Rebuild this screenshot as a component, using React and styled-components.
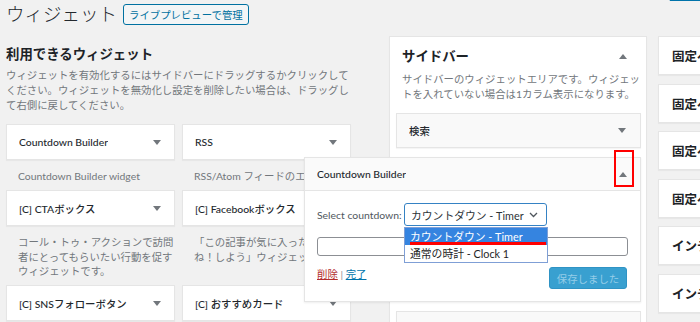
import styled, { createGlobalStyle } from 'styled-components';

const GlobalStyle = createGlobalStyle`
  html, body {
    margin: 0;
    padding: 0;
    background: #f1f1f1;
    overflow: hidden;
  }
  body {
    font-family: Lato, "Noto Sans CJK JP", sans-serif;
    font-size: 10.4px;
    color: #23282d;
  }
  * { box-sizing: border-box; }
`;

const available = [
  { title: 'Countdown Builder', desc: ['Countdown Builder widget'] },
  { title: 'RSS', desc: ['RSS/Atom フィードのエントリー。'] },
  { title: '[C] CTAボックス', desc: ['コール・トゥ・アクションで訪問', '者にとってもらいたい行動を促す', 'ウィジェットです。'] },
  { title: '[C] Facebookボックス', desc: ['「この記事が気に入ったらいい', 'ね！しよう」ウィジェットです。'] },
  { title: '[C] SNSフォローボタン', desc: ['SNSフォローボタンを表示する'] },
  { title: '[C] おすすめカード', desc: ['おすすめカードを表示します。'] },
];

const areas = [
  '固定ページタイトル上',
  '固定ページ本文上',
  '固定ページ本文中',
  '固定ページ本文下',
  'インデックスリスト上',
  'インデックスリスト中',
];

const Page = styled.div`
  width: 700px;
  height: 322px;
  overflow: hidden;
  padding-left: 6px;
`;

const Header = styled.header`
  display: flex;
  align-items: flex-start;
  height: 36px;
`;

const Title = styled.h1`
  margin: 0;
  font-family: "Noto Sans CJK JP", sans-serif;
  font-size: 18.5px;
  font-weight: 300;
  line-height: 27px;
  color: #23282d;
`;

const PreviewButton = styled.button`
  margin: 4px 0 0 6px;
  height: 21px;
  padding: 0 5px;
  font-family: inherit;
  font-size: 10.4px;
  color: #0071a1;
  background: #f3f5f6;
  border: 1px solid #0071a1;
  border-radius: 3px;
`;

const HelpLink = styled.a`
  margin: -12px -14px 0 auto;
  font-size: 10.4px;
  line-height: 14px;
  color: #0073aa;
  text-decoration: underline;
  white-space: nowrap;
`;

const Columns = styled.div`
  display: flex;
  align-items: flex-start;
  & > * { flex-shrink: 0; }
`;

const Available = styled.section`
  width: 345px;
`;

const SectionTitle = styled.h2`
  margin: 8.5px 0 0;
  font-size: 13.4px;
  font-weight: 700;
  line-height: 18px;
  color: #1d2327;
`;

const Intro = styled.p`
  margin: 5.5px 0 0;
  font-size: 10.4px;
  line-height: 15px;
  color: #72777c;
  white-space: nowrap;
`;

const WidgetGrid = styled.div`
  display: grid;
  grid-template-columns: 169px 169px;
  column-gap: 7px;
  margin-top: 11px;
`;

const Card = styled.div`
  display: flex;
  align-items: center;
  justify-content: space-between;
  height: ${p => p.$height || 36}px;
  padding: 0 ${p => p.$right || 13}px 0 12px;
  background: ${p => (p.$muted ? '#f9f9f9' : '#fff')};
  border: 1px solid #e5e5e5;
  box-shadow: 0 1px 1px rgba(0, 0, 0, 0.04);
`;

const CardTitle = styled.h3`
  margin: 0;
  font-size: 10.4px;
  font-weight: 500;
  color: #23282d;
  white-space: nowrap;
  overflow: hidden;
`;

const Arrow = styled.span`
  flex-shrink: 0;
  width: 0;
  height: 0;
  border-left: 4px solid transparent;
  border-right: 4px solid transparent;
  ${p => (p.$up ? 'border-bottom: 5px solid #72777c;' : 'border-top: 5px solid #72777c;')}
`;

const WidgetDesc = styled.p`
  margin: 0;
  padding: 9px 0 6.5px 12px;
  font-size: 10.4px;
  line-height: 14.5px;
  color: #72777c;
  white-space: nowrap;
  overflow: hidden;
`;

const SidebarPanel = styled.section`
  width: 258px;
  min-height: 320px;
  margin-left: 38px;
  padding: 10px 5px 0 6px;
  background: #fff;
  border: 1px solid #e5e5e5;
  box-shadow: 0 1px 1px rgba(0, 0, 0, 0.04);
`;

const PanelHead = styled.div`
  display: flex;
  align-items: center;
  justify-content: space-between;
  padding: 0 14px 0 6px;
`;

const PanelTitle = styled.h2`
  margin: 0;
  font-size: 13.4px;
  font-weight: 700;
  line-height: 18px;
  color: #1d2327;
`;

const PanelDesc = styled.p`
  margin: 7px 0 0;
  padding-left: 6px;
  font-size: 10.4px;
  line-height: 14.5px;
  color: #72777c;
  white-space: nowrap;
`;

const SidebarList = styled.div`
  display: flex;
  flex-direction: column;
  gap: 9px;
  margin-top: 12px;
`;

const OpenWidget = styled.div`
  position: relative;
  z-index: 3;
  width: calc(100% + 92px);
  margin-left: -92px;
  background: #fff;
  border: 1px solid #e5e5e5;
  box-shadow: 0 1px 2px rgba(0, 0, 0, 0.07);
`;

const OpenHead = styled.div`
  display: flex;
  align-items: center;
  justify-content: space-between;
  height: 33px;
  padding: 0 13px 0 12px;
  background: #fafafa;
  border-bottom: 1px solid #e5e5e5;
`;

const Marker = styled.span`
  position: absolute;
  top: -8px;
  right: 6px;
  width: 20px;
  height: 37px;
  border: 2px solid #ff0000;
`;

const OpenBody = styled.div`
  padding: 12px 12px 12px;
`;

const SelectRow = styled.div`
  display: flex;
  align-items: center;
`;

const Label = styled.label`
  width: 87px;
  font-size: 10.4px;
  color: #50575e;
`;

const SelectBox = styled.div`
  position: relative;
  display: flex;
  align-items: center;
  justify-content: space-between;
  width: 143px;
  height: 23px;
  padding: 0 8px 0 6px;
  font-size: 10.8px;
  color: #2c3338;
  background: #fff;
  border: 1px solid #3582c4;
  border-radius: 3px;
`;

const Dropdown = styled.ul`
  position: absolute;
  top: calc(100% + 2px);
  left: -1px;
  width: 144px;
  margin: 0;
  padding: 0;
  list-style: none;
  background: #fff;
  border: 1px solid #7f9fd6;
  z-index: 4;
`;

const Option = styled.li`
  position: relative;
  height: 17px;
  padding-left: 5px;
  font-size: 10.8px;
  line-height: 17px;
  color: ${p => (p.$active ? '#fff' : '#1e1e1e')};
  background: ${p => (p.$active ? '#3584e0' : '#fff')};
  white-space: nowrap;
`;

const Underline = styled.span`
  position: absolute;
  left: 5px;
  right: 1px;
  bottom: 0;
  height: 3px;
  background: #ff0000;
`;

const TextInput = styled.div`
  height: 19px;
  margin-top: 11px;
  background: #fff;
  border: 1px solid #8c8f94;
  border-radius: 3px;
`;

const Actions = styled.div`
  display: flex;
  align-items: flex-start;
  justify-content: space-between;
  margin-top: 11px;
`;

const Links = styled.div`
  font-size: 10.4px;
  line-height: 14px;
  color: #8c8f94;
  a { text-decoration: underline; }
`;

const DeleteLink = styled.a`
  color: #b32d2e;
`;

const DoneLink = styled.a`
  color: #0073aa;
`;

const SaveButton = styled.button`
  width: 78px;
  height: 22px;
  margin-right: 1px;
  padding: 0;
  font-family: inherit;
  font-size: 10.4px;
  color: #94cde8;
  background: #39a0d0;
  border: 1px solid #2f93c4;
  border-radius: 3px;
`;

const AreaColumn = styled.div`
  width: 258px;
  margin-left: 11px;
  display: flex;
  flex-direction: column;
  gap: 8.5px;
`;

const AreaCard = styled.div`
  height: 39px;
  display: flex;
  align-items: center;
  padding-left: 13px;
  background: #fff;
  border: 1px solid #e5e5e5;
  box-shadow: 0 1px 1px rgba(0, 0, 0, 0.04);
  font-size: 12.5px;
  font-weight: 700;
  color: #1d2327;
  white-space: nowrap;
`;

const Chevron = () => (
  <svg width="9" height="6" viewBox="0 0 9 6">
    <polyline points="1,1 4.5,4.5 8,1" fill="none" stroke="#50575e" strokeWidth="1.3" />
  </svg>
);

export default function App() {
  return (
    <Page>
      <GlobalStyle />
      <Header>
        <Title>ウィジェット</Title>
        <PreviewButton>ライブプレビューで管理</PreviewButton>
        <HelpLink>ヘルプ ▼</HelpLink>
      </Header>

      <Columns>
        <Available>
          <SectionTitle>利用できるウィジェット</SectionTitle>
          <Intro>
            ウィジェットを有効化するにはサイドバーにドラッグするかクリックして<br />
            ください。ウィジェットを無効化し設定を削除したい場合は、ドラッグし<br />
            て右側に戻してください。
          </Intro>
          <WidgetGrid>
            {available.map(w => (
              <div key={w.title}>
                <Card>
                  <CardTitle>{w.title}</CardTitle>
                  <Arrow />
                </Card>
                <WidgetDesc>
                  {w.desc.map((line, i) => (
                    <span key={i}>{line}{i < w.desc.length - 1 && <br />}</span>
                  ))}
                </WidgetDesc>
              </div>
            ))}
          </WidgetGrid>
        </Available>

        <SidebarPanel>
          <PanelHead>
            <PanelTitle>サイドバー</PanelTitle>
            <Arrow $up />
          </PanelHead>
          <PanelDesc>
            サイドバーのウィジェットエリアです。ウィジェッ<br />
            トを入れていない場合は1カラム表示になります。
          </PanelDesc>
          <SidebarList>
            <Card $muted $height={35} $right={14}>
              <CardTitle>検索</CardTitle>
              <Arrow />
            </Card>
            <OpenWidget>
              <OpenHead>
                <CardTitle>Countdown Builder</CardTitle>
                <Arrow $up />
              </OpenHead>
              <Marker />
              <OpenBody>
                <SelectRow>
                  <Label>Select countdown:</Label>
                  <SelectBox>
                    <span>カウントダウン - Timer</span>
                    <Chevron />
                    <Dropdown>
                      <Option $active>
                        カウントダウン - Timer
                        <Underline />
                      </Option>
                      <Option>通常の時計 - Clock 1</Option>
                    </Dropdown>
                  </SelectBox>
                </SelectRow>
                <TextInput />
                <Actions>
                  <Links>
                    <DeleteLink>削除</DeleteLink> | <DoneLink>完了</DoneLink>
                  </Links>
                  <SaveButton disabled>保存しました</SaveButton>
                </Actions>
              </OpenBody>
            </OpenWidget>
            <Card $muted $height={35} $right={14}>
              <CardTitle>カスタムHTML</CardTitle>
              <Arrow />
            </Card>
          </SidebarList>
        </SidebarPanel>

        <AreaColumn>
          {areas.map(a => (
            <AreaCard key={a}>{a}</AreaCard>
          ))}
        </AreaColumn>
      </Columns>
    </Page>
  );
}
